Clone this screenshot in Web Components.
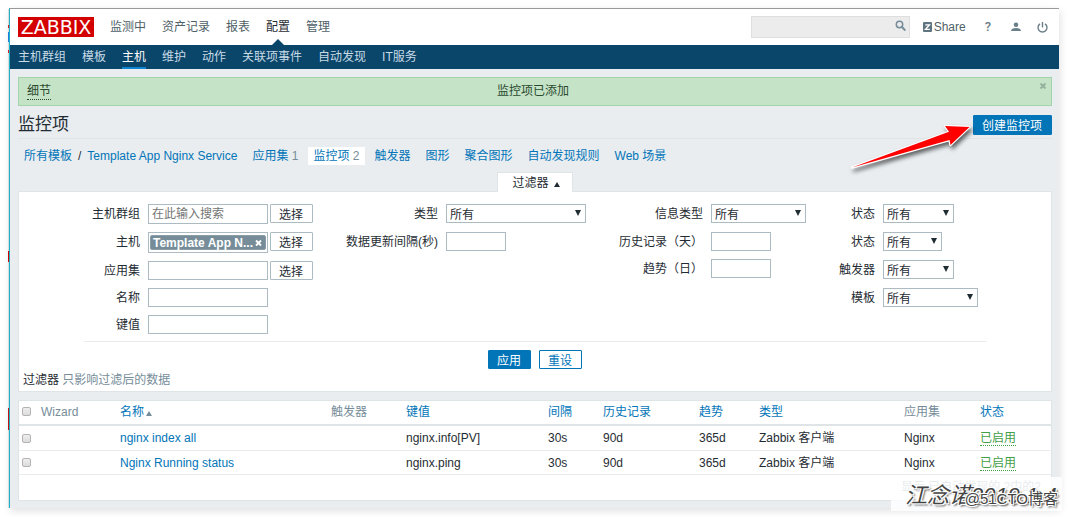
<!DOCTYPE html>
<html lang="zh-CN">
<head>
<meta charset="utf-8">
<title>监控项</title>
<style>
  body {
    margin: 0;
    background: #fff;
    color: #1f2c33;
    font: 12px/18px "Liberation Sans", "Noto Sans CJK SC", sans-serif;
  }
</style>
</head>
<body>
<zbx-app></zbx-app>

<script>
function define(name, css, html) {
  customElements.define(name, class extends HTMLElement {
    constructor() {
      super();
      const root = this.attachShadow({ mode: 'open' });
      const t = document.createElement('template');
      t.innerHTML = '<style>*{box-sizing:border-box}' + css + '</style>' +
        (typeof html === 'function' ? html(this) : html);
      root.append(t.content.cloneNode(true));
    }
  });
}

/* Link of the main menu or the submenu */
define('zbx-nav-link', `
  :host { display: block; position: relative; height: 100%; }
  a { display: block; height: 100%; line-height: inherit; color: inherit; text-decoration: none; white-space: nowrap; }
  :host([kind=main][active]) { color: #1f2c33; }
  :host([kind=main][active])::after {
    content: ""; position: absolute; left: 50%; bottom: 0; margin-left: -6px;
    border: 6px solid transparent; border-top: 0; border-bottom-color: #0a466a;
  }
  :host([kind=sub][active]) { color: #fff; }
  :host([kind=sub][active]) a { border-bottom: 2px solid #0f84d0; }
`, '<a href="#"><slot></slot></a>');

define('zbx-header', `
  :host { display: block; background: #fff; }
  .top { display: flex; align-items: center; height: 36px; padding: 0 11px 0 8px; }
  .logo { width: 76px; height: 20px; background: #d40000; color: #fff; text-decoration: none;
    text-align: center; font: 19px/21px "DejaVu Sans", sans-serif; white-space: nowrap; }
  nav { display: flex; gap: 16px; }
  .main { height: 36px; line-height: 36px; margin-left: 16px; color: #4f5f68; }
  .sub { height: 24px; line-height: 24px; padding: 0 8px; background: #0a466a; color: #c8dbe6; }
  form { position: relative; width: 159px; height: 22px; margin: 0 12px 0 auto; }
  form input { width: 100%; height: 22px; border: 1px solid #dfdfdf; background: #ececec; padding: 0 24px 0 4px; font: inherit; }
  form button { position: absolute; right: 4px; top: 4px; width: 11px; height: 12px; padding: 0; border: 0; background: none; }
  svg { display: block; }
  .tools { display: flex; align-items: center; color: #6b7f8b; }
  .tools a { color: inherit; text-decoration: none; display: flex; align-items: center; }
  .tools .share { color: #4f5f68; margin-right: 19px; }
  .help { font: 500 13px/18px Roboto, sans-serif; margin-right: 20px; }
  .user { margin-right: 16px; }
`, `
  <div class="top">
    <a class="logo" href="#">ZABBIX</a>
    <nav class="main">
      <zbx-nav-link kind="main">监测中</zbx-nav-link>
      <zbx-nav-link kind="main">资产记录</zbx-nav-link>
      <zbx-nav-link kind="main">报表</zbx-nav-link>
      <zbx-nav-link kind="main" active>配置</zbx-nav-link>
      <zbx-nav-link kind="main">管理</zbx-nav-link>
    </nav>
    <form>
      <input type="text" aria-label="搜索">
      <button type="button" aria-label="搜索"><svg width="11" height="12" viewBox="0 0 11 12"><circle cx="4.500" cy="4.500" r="3.200" fill="none" stroke="#768d99" stroke-width="1.500"/><path d="M7 7l2.700 2.900" stroke="#768d99" stroke-width="2" stroke-linecap="round"/></svg></button>
    </form>
    <div class="tools">
      <a class="share" href="#"><svg width="11" height="10" viewBox="0 0 11 10"><rect x="1" width="9" height="10" rx="1" fill="#5f7682"/><path d="M3.300 2.800h4.200l-4 4.500h4.300" fill="none" stroke="#fff" stroke-width="1.300"/></svg>&#8202;Share</a>
      <a class="help" href="#">?</a>
      <a class="user" href="#" aria-label="用户"><svg width="10" height="10" viewBox="0 0 11 10"><circle cx="5.500" cy="2.500" r="2.500" fill="#6b7f8b"/><path d="M0 9.500C.3 7.300 2 6.200 5.500 6.200s5.200 1.100 5.500 3.300z" fill="#6b7f8b"/></svg></a>
      <a href="#" aria-label="退出"><svg width="11" height="11" viewBox="0 0 11 11"><path d="M3 1.800A4.500 4.500 0 1 0 8 1.800M5.500 0v5.500" fill="none" stroke="#6b7f8b" stroke-width="1.400"/></svg></a>
    </div>
  </div>
  <nav class="sub">
    <zbx-nav-link kind="sub">主机群组</zbx-nav-link>
    <zbx-nav-link kind="sub">模板</zbx-nav-link>
    <zbx-nav-link kind="sub" active>主机</zbx-nav-link>
    <zbx-nav-link kind="sub">维护</zbx-nav-link>
    <zbx-nav-link kind="sub">动作</zbx-nav-link>
    <zbx-nav-link kind="sub">关联项事件</zbx-nav-link>
    <zbx-nav-link kind="sub">自动发现</zbx-nav-link>
    <zbx-nav-link kind="sub">IT服务</zbx-nav-link>
  </nav>
`);

define('zbx-message', `
  :host { display: grid; grid-template-columns: 1fr auto 1fr; position: relative; border: 1px solid #a3d3a8; background: #c5e3c7; color: #2a4a2e;
    height: 29px; padding: 4px 12px 4px 8px; }
  .details { justify-self: start; height: 18px; color: inherit; text-decoration: none; border-bottom: 1px dotted #2a4a2e; }
  .close { position: absolute; right: 4px; top: 4px; width: 8px; height: 8px; padding: 0; border: 0; background: none; }
  svg { display: block; }
`, `
  <a class="details" href="#">细节</a>
  <span><slot></slot></span>
  <button class="close" type="button" aria-label="关闭"><svg width="8" height="8" viewBox="0 0 8 8"><path d="M1.500 1.500l5 5M6.500 1.500l-5 5" stroke="#93b09c" stroke-width="1.800"/></svg></button>
`);

define('zbx-button', `
  :host { display: inline-block; }
  button { display: block; height: 19px; line-height: 16px; padding: 2px 9px 0 8px; border: 1px solid #acbbc2; border-radius: 1px;
    background: #fff; color: #1f2c33; font-family: inherit; font-size: 12px; white-space: nowrap; }
  :host([kind=primary]) button, :host([kind=large]) button { background: #0275b8; border-color: #0275b8; color: #fff; }
  :host([kind=large]) button { height: 20px; }
  :host([kind=outline]) button { border-color: #0275b8; color: #0275b8; }
`, '<button type="button"><slot></slot></button>');

define('zbx-title-bar', `
  :host { display: flex; position: relative; align-items: center; justify-content: space-between;
    height: 33px; border-bottom: 1px solid #dfe4e7; }
  h1 { margin: 5px 0 0; font-size: 17px; line-height: 24px; font-weight: 400; }
  zbx-button { margin-top: 6px; }
  .arrow { position: absolute; right: 75px; top: 12px; }
`, `
  <h1><slot></slot></h1>
  <zbx-button kind="large">创建监控项</zbx-button>
  <svg class="arrow" width="132" height="60" viewBox="0 0 132 60" aria-hidden="true">
    <g style="filter:drop-shadow(2px 3px 2px rgba(0,0,0,.6))">
      <path d="M124.500 9L100 8L104 13.800L7 49.500L104.500 22L105.500 27Z" fill="#f00" stroke="#fff" stroke-width="2.400" stroke-linejoin="round" paint-order="stroke"/>
    </g>
  </svg>
`);

define('zbx-crumb', `
  :host { display: block; padding: 0 5px; height: 18px; white-space: nowrap; color: #768d99; }
  :host([active]) { background: #fff; }
  a { color: #0275b8; text-decoration: none; }
`, el => `<a href="#"><slot></slot></a>${el.hasAttribute('count') ? ' ' + el.getAttribute('count') : ''}`);

define('zbx-breadcrumbs', `
  :host { display: flex; flex-wrap: wrap; gap: 5px; padding: 8px 0 7px 1px; }
  .path { display: flex; gap: 1px; }
`, `
  <div class="path"><zbx-crumb>所有模板</zbx-crumb>/<zbx-crumb>Template App Nginx Service</zbx-crumb></div>
  <zbx-crumb count="1">应用集</zbx-crumb>
  <zbx-crumb count="2" active>监控项</zbx-crumb>
  <zbx-crumb>触发器</zbx-crumb>
  <zbx-crumb>图形</zbx-crumb>
  <zbx-crumb>聚合图形</zbx-crumb>
  <zbx-crumb>自动发现规则</zbx-crumb>
  <zbx-crumb>Web 场景</zbx-crumb>
`);

/* One labelled row of the filter: kind = text | picker | tag | select */
define('zbx-field', `
  :host { display: flex; gap: 8px; align-items: flex-start; }
  label { flex: 1; text-align: right; height: 19px; line-height: 20px; white-space: nowrap; }
  .field { width: var(--field-width); display: flex; gap: 2px; align-items: flex-start; }
  input, select, .tagbox { height: 19px; border: 1px solid #acbbc2; border-radius: 0; background: #fff; color: #1f2c33;
    font-family: inherit; font-size: 12px; margin: 0; }
  input { padding: 0 3px; }
  input::placeholder { color: #757575; }
  :host([tall]) input { height: 20px; }
  .w-l { width: 120px; } .w-s { width: 60px; }
  .pick { position: relative; margin-bottom: 1px; }
  select { display: block; width: 100%; padding: 3px 3px 0; line-height: 15px; appearance: none; }
  .pick svg { position: absolute; right: 5px; top: 6px; pointer-events: none; }
  .tagbox { height: 21px; padding: 2px 1px; display: flex; }
  .tag { flex: 1; display: flex; justify-content: space-between; align-items: center; background: #768d99; border: 1px solid #8a9da7; border-radius: 2px; height: 15px;
    color: #fff; font-weight: 700; line-height: 14px; padding: 0 3px 0 2px; white-space: nowrap; }
  .tag button { width: 7px; height: 8px; padding: 0; border: 0; background: none; }
  svg { display: block; }
`, el => {
  const a = n => el.getAttribute(n);
  const kind = a('kind');
  const choose = '<zbx-button>选择</zbx-button>';
  let control = '';
  if (kind === 'select')
    control = `<div class="pick" style="width:${a('width')}px"><select id="c"><option>所有</option></select><svg width="6" height="6" viewBox="0 0 6 6"><path d="M0 0h6L3 6z" fill="#1f2c33"/></svg></div>`;
  else if (kind === 'tag')
    control = `<div class="tagbox w-l"><span class="tag">Template App N...<button id="c" type="button"><svg width="7" height="8" viewBox="0 0 7 8"><path d="M1 1.500l5 5M6 1.500l-5 5" stroke="#fff" stroke-width="1.900"/></svg></button></span></div>` + choose;
  else
    control = `<input id="c" type="text" class="${a('size') === 's' ? 'w-s' : 'w-l'}" placeholder="${a('hint') || ''}">` + (kind === 'picker' ? choose : '');
  return `<label for="c">${a('label')}</label><div class="field">${control}</div>`;
});

define('zbx-filter', `
  :host { display: block; }
  .tab { display: block; width: 76px; height: 20px; margin: 0 auto -1px; position: relative; background: #fff; border: 1px solid #dfe4e7; border-bottom: 0;
    font-family: inherit; font-size: 12px; line-height: 18px; padding: 1px 0 0 2px; color: #1f2c33; }
  .tab svg { display: inline-block; margin-left: 5px; }
  .box { background: #fff; border: 1px solid #dfe4e7; padding: 12px 4px 2px; }
  .groups { display: grid; grid-template-columns: 229fr 273fr 220fr 181fr; margin: 0 60px 0 61px; padding-bottom: 7px; border-bottom: 1px solid #e9edef; }
  .group { display: flex; flex-direction: column; gap: 8px; }
  .actions { display: flex; justify-content: center; gap: 8px; padding-top: 8px; }
  p { margin: 2px 0 0; color: #768d99; }
  p b { font-weight: 400; color: #1f2c33; }
`, `
  <button class="tab" type="button">过滤器<svg width="6" height="5" viewBox="0 0 6 5"><path d="M0 5h6L3 0z" fill="#1f2c33"/></svg></button>
  <div class="box">
    <div class="groups">
      <div class="group" style="--field-width:165px">
        <zbx-field kind="picker" label="主机群组" hint="在此输入搜索" tall></zbx-field>
        <zbx-field kind="tag" label="主机"></zbx-field>
        <zbx-field kind="picker" label="应用集"></zbx-field>
        <zbx-field label="名称"></zbx-field>
        <zbx-field label="键值"></zbx-field>
      </div>
      <div class="group" style="--field-width:140px">
        <zbx-field kind="select" width="140" label="类型"></zbx-field>
        <zbx-field size="s" label="数据更新间隔(秒)"></zbx-field>
      </div>
      <div class="group" style="--field-width:95px">
        <zbx-field kind="select" width="95" label="信息类型"></zbx-field>
        <zbx-field size="s" label="历史记录（天）"></zbx-field>
        <zbx-field size="s" label="趋势（日）"></zbx-field>
      </div>
      <div class="group" style="--field-width:104px">
        <zbx-field kind="select" width="71" label="状态"></zbx-field>
        <zbx-field kind="select" width="59" label="状态"></zbx-field>
        <zbx-field kind="select" width="71" label="触发器"></zbx-field>
        <zbx-field kind="select" width="95" label="模板"></zbx-field>
      </div>
    </div>
    <div class="actions"><zbx-button kind="primary">应用</zbx-button><zbx-button kind="outline">重设</zbx-button></div>
    <p><b>过滤器</b> 只影响过滤后的数据</p>
  </div>
`);

const itemRow = (name, key) => `<tr>
  <td class="check"><input type="checkbox" aria-label="${name}"></td><td></td><td><a href="#">${name}</a></td><td></td><td>${key}</td>
  <td>30s</td><td>90d</td><td>365d</td><td>Zabbix 客户端</td><td>Nginx</td><td><a class="on" href="#">已启用</a></td></tr>`;

define('zbx-item-table', `
  :host { display: block; background: #fff; border: 1px solid #dfe4e7; }
  table { width: 100%; border-collapse: separate; border-spacing: 0; table-layout: fixed; }
  th, td { padding: 0 0 0 5px; text-align: left; font-weight: 400; white-space: nowrap; }
  th { height: 25px; padding-bottom: 2px; border-bottom: 2px solid #dfe4e7; color: #768d99; }
  td { height: 25px; border-bottom: 1px solid #e9edef; }
  tbody tr:last-child td { height: 24px; }
  a { color: #0275b8; text-decoration: none; }
  .check { padding-left: 3px; }
  input { appearance: none; display: block; width: 9px; height: 9px; margin: 0; border: 1px solid #b3b3b3; border-radius: 2px; background: linear-gradient(#eee, #dcdcdc); }
  .on { display: inline-block; height: 16px; line-height: 16px; color: #429e47; border-bottom: 1px dotted #429e47; }
  .sort { display: inline-block; margin-left: 2px; }
  .total { height: 25px; padding: 3px 10px; text-align: right; color: #768d99; }
`, `
  <table>
    <colgroup><col style="width:17px"><col style="width:79px"><col><col style="width:75px"><col style="width:142px"><col style="width:55px"><col style="width:96px"><col style="width:60px"><col style="width:145px"><col style="width:76px"><col style="width:76px"></colgroup>
    <thead><tr>
      <th class="check"><input type="checkbox" aria-label="全选"></th><th>Wizard</th>
      <th><a href="#">名称<svg class="sort" width="6" height="5" viewBox="0 0 6 5"><path d="M0 5h6L3 0z" fill="#768d99"/></svg></a></th>
      <th>触发器</th><th><a href="#">键值</a></th><th><a href="#">间隔</a></th><th><a href="#">历史记录</a></th>
      <th><a href="#">趋势</a></th><th><a href="#">类型</a></th><th>应用集</th><th><a href="#">状态</a></th>
    </tr></thead>
    <tbody>${itemRow('nginx index all', 'nginx.info[PV]')}${itemRow('Nginx Running status', 'nginx.ping')}</tbody>
  </table>
  <div class="total">显示 已自动发现的 2中的2</div>
`);

/* Signature overlay in the corner of the page */
define('zbx-watermark', `
  :host { position: absolute; right: -3px; bottom: -3px; width: 171px; height: 34px; background: rgba(255,255,255,.82); white-space: nowrap;
    color: #444; text-shadow: -1px -1px 0 #fff, 1px -1px 0 #fff, -1px 1px 0 #fff, 1px 1px 0 #fff, 2px 2px 2px #555; }
  .name { position: absolute; left: 14px; top: 7px; font: italic 22px/24px "Liberation Sans", "Noto Sans CJK SC", sans-serif; }
  .site { position: absolute; right: 4px; top: 13px; font-size: 15px; line-height: 18px; }
`, '<span class="name">江念诺2019.1.4</span><span class="site">@51CTO博客</span>');

define('zbx-app', `
  :host { display: block; padding: 8px 9px 10px 8px; }
  .frame { position: relative; border-top: 1px solid #999; background: #e9edf0; margin-left: 1px; border-left: 1px solid #1eb0c4; box-shadow: 1px 3px 8px rgba(0,0,0,.12); }
  .frame::before { content: ""; position: absolute; left: -2px; top: 0; bottom: 0; width: 1px;
    background: linear-gradient(#d8dcde 16px, #d02020 16px 19px, #d8dcde 19px 23px, #2080e0 23px 33px, #d8dcde 33px 41px, #d02020 41px 44px, #d8dcde 44px 242px, #d00000 242px 253px, #d8dcde 253px 399px, #c01818 399px 421px, #d8dcde 421px); }
  main { padding: 8px 7px 7px 8px; }
  zbx-item-table { margin-top: 8px; }
`, `
  <div class="frame">
    <zbx-header></zbx-header>
    <main>
      <zbx-message>监控项已添加</zbx-message>
      <zbx-title-bar>监控项</zbx-title-bar>
      <zbx-breadcrumbs></zbx-breadcrumbs>
      <zbx-filter></zbx-filter>
      <zbx-item-table></zbx-item-table>
    </main>
    <zbx-watermark></zbx-watermark>
  </div>
`);
</script>
</body>
</html>
